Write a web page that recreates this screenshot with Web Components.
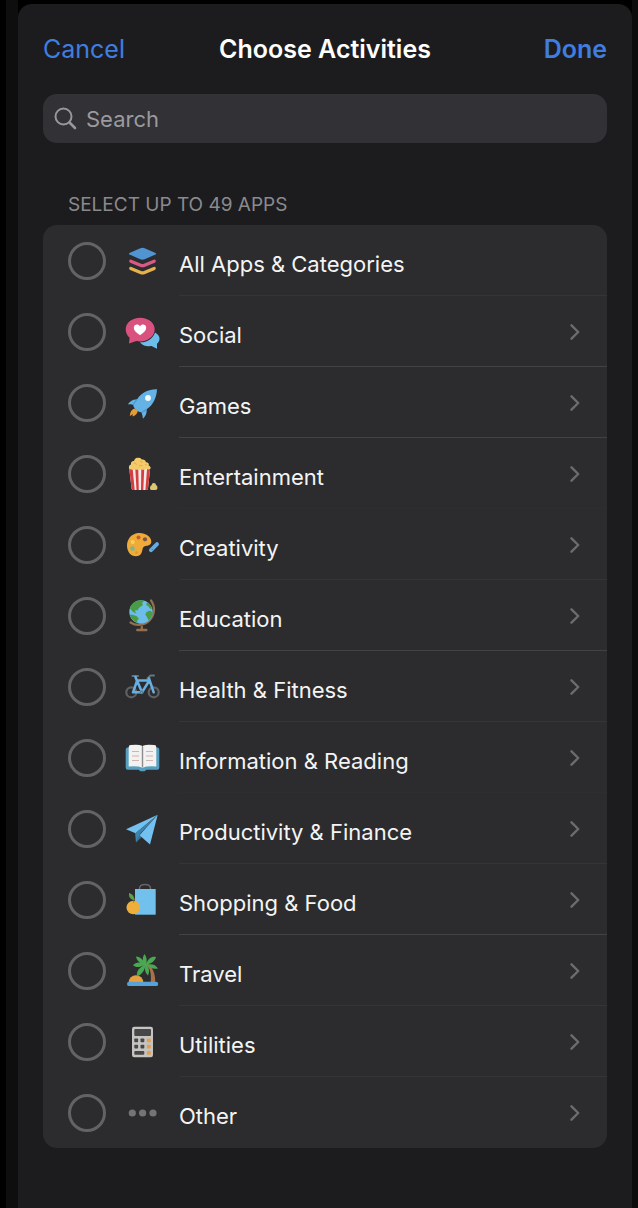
<!DOCTYPE html>
<html lang="en">
<head>
  <meta charset="UTF-8">
  <link rel="icon" href="data:," />
  <meta name="viewport" content="width=device-width, initial-scale=1.0">
  <title>Choose Activities</title>
  <style>
    * {
      box-sizing: border-box;
    }
    html {
      height: 100%;
      background: #000;
    }
    body {
      margin: 0;
      min-height: 100%;
      display: flex;
      padding-left: 6px;
      font-family: Inter, "Liberation Sans", sans-serif;
      color: #f4f4f5;
      background: #000;
    }
  </style>
</head>

<body>
  <activity-sheet>
    <sheet-header slot="header" heading="Choose Activities"></sheet-header>
    <search-field slot="header" placeholder="Search"></search-field>
    <activity-list heading="SELECT UP TO 49 APPS"></activity-list>
  </activity-sheet>
</body>

<template id="sheet-template">
  <style>
    :host {
      flex: 1;
      display: flex;
      padding: 0 6px 0 12px;
      background: linear-gradient(to right, #0e0e0e 12px, #000 12px, #000 calc(100% - 6px), #0c0c0c calc(100% - 6px));
    }
    .sheet {
      flex: 1;
      min-width: 0;
      margin-top: 4px;
      padding: 0 25px 60px;
      border-radius: 14px 14px 0 0;
      background: #1c1c1e;
    }
    header {
      display: flex;
      flex-direction: column;
    }
  </style>
  <div class="sheet">
    <header><slot name="header"></slot></header>
    <main><slot></slot></main>
  </div>
</template>

<template id="header-template">
  <style>
    :host {
      display: grid;
      grid-template-columns: 1fr auto 1fr;
      align-items: center;
      height: 90px;
    }
    h1, button {
      margin: 0;
      padding: 0;
      font-size: 25px;
      line-height: 32px;
    }
    h1 {
      font-weight: 600;
      color: #fff;
    }
    button {
      border: 0;
      background: none;
      font-family: inherit;
      font-weight: 400;
      color: #3f7ee0;
      justify-self: start;
      cursor: pointer;
    }
    .done {
      font-weight: 600;
      justify-self: end;
    }
  </style>
  <button type="button">Cancel</button>
  <h1></h1>
  <button type="button" class="done">Done</button>
</template>

<template id="search-template">
  <style>
    :host {
      display: block;
    }
    label {
      display: flex;
      align-items: center;
      gap: 8px;
      height: 49px;
      padding: 0 11px;
      border-radius: 14px;
      background: #313136;
    }
    svg {
      flex: none;
      width: 24px;
      height: 24px;
    }
    input {
      flex: 1;
      min-width: 0;
      padding: 0;
      border: 0;
      outline: 0;
      background: none;
      font-family: inherit;
      font-size: 22px;
      line-height: 28px;
      color: #fff;
    }
    input::placeholder {
      color: #9a9a9f;
      opacity: 1;
    }
  </style>
  <label>
    <svg viewBox="0 0 24 24" fill="none" stroke="#97979c" stroke-width="2" stroke-linecap="round" aria-hidden="true">
      <circle cx="9.500" cy="9.500" r="8"/>
      <path d="M15.500 15.500l5.500 5.500" stroke-width="2.600"/>
    </svg>
    <input type="text">
  </label>
</template>

<template id="list-template">
  <style>
    :host {
      display: block;
      padding-top: 48px;
    }
    h2 {
      margin: 0;
      padding: 0 25px 7px;
      font-size: 19px;
      line-height: 27px;
      font-weight: 400;
      color: #8a8a8e;
    }
    .card {
      border-radius: 14px;
      background: #2c2c2e;
      overflow: hidden;
    }
  </style>
  <h2></h2>
  <div class="card"></div>
</template>

<template id="row-template">
  <style>
    :host {
      display: flex;
      height: 71px;
      padding-left: 25px;
      --line: #353537;
    }
    :host([line="strong"]) { --line: #424244; }
    :host([line="none"]) { --line: #2e2e30; }
    * {
      box-sizing: border-box;
    }
    label {
      flex: 1;
      display: flex;
      align-items: center;
    }
    input {
      appearance: none;
      flex: none;
      width: 38px;
      height: 38px;
      margin: 0 19px 0 0;
      border: 3px solid #636366;
      border-radius: 50%;
    }
    input:checked {
      border-color: #3f7ee0;
      background: #3f7ee0;
    }
    svg {
      flex: none;
      display: block;
    }
    .icon {
      width: 36px;
      height: 36px;
      margin-right: 18px;
    }
    .name {
      flex: 1;
      align-self: stretch;
      padding-top: 7px;
      border-bottom: 1px solid var(--line);
      font-size: 22px;
      line-height: 64px;
      white-space: nowrap;
    }
    button {
      padding: 2px 27px 0 0;
      border: 0;
      border-bottom: 1px solid var(--line);
      background: none;
      cursor: pointer;
    }
    :host([last]) .name,
    :host([last]) button {
      border-color: transparent;
    }
  </style>
  <label>
    <input type="checkbox">
    <svg class="icon" viewBox="0 0 36 36" aria-hidden="true"></svg>
    <span class="name"><slot></slot></span>
  </label>
  <button type="button">
    <svg width="10" height="18" viewBox="0 0 10 18" fill="none" stroke="#6c6c70" stroke-width="2.400" stroke-linecap="round" stroke-linejoin="round" aria-hidden="true">
      <path d="M1.500 2.300L8.200 9L1.500 15.700"/>
    </svg>
  </button>
</template>

<script>
  const icons = {
    layers: `
      <g fill="none" stroke-width="3.300" stroke-linecap="round" stroke-linejoin="round">
        <path d="M5.800 25.500l9.700 4q2 .8 4 0l9.700-4" stroke="#e6b04a"/>
        <path d="M5.800 18.200l9.700 4q2 .8 4 0l9.700-4" stroke="#d55a86"/>
      </g>
      <path d="M4.500 10l10.800-4.700q2.200-.9 4.400 0L30.500 10q1.200.8 0 1.600l-10.800 4.700q-2.200.9-4.400 0L4.500 11.600q-1.200-.8 0-1.600z" fill="#5094d2"/>`,
    social: `
      <path d="M26 17.500c5 .5 8.500 3.500 8.500 7.200 0 2-1 3.700-2.500 5v5l-5.500-2.600c-5 .6-10-1-11.500-4.200z" fill="#6dbdec"/>
      <path d="M15.200 3.700c8 0 14.500 5 14.500 11.500S23.500 27.500 15.200 27.500c-1.300 0-2.600-.1-3.800-.4L4 29.500l.6-5.700C2.200 21.500.7 18.500.7 15.200.7 8.700 7.200 3.700 15.200 3.700z" fill="#d9517f" stroke="#2c2c2e" stroke-width="1.600" paint-order="stroke"/>
      <path d="M15 21.200c-4-2.700-6.200-4.700-6.200-7.400 0-3.500 4.500-4.500 6.200-1.400 1.700-3.100 6.200-2.100 6.200 1.400 0 2.700-2.200 4.700-6.200 7.400z" fill="#fff"/>`,
    rocket: `
      <path d="M9.500 23.500c-2.800.8-4.500 3.500-4.700 7.500 1.500-.5 2-1.200 2.800-2.200-.2 1.200 0 1.700.2 2.700 3-1.200 4.700-3 5-5.700z" fill="#e89b34"/>
      <path d="M32 4.300C24 4 16.500 7.500 12 14.500c-3.500-.5-6.500 1-9.300 5 2.500-.5 4.600-.2 5.600.6 0 3 4.500 7.400 8.200 7.200.8 2.300 1 4 1.500 6.500 3.300-3 4-7 3.600-9.500C28.500 20 31.700 12 32 4.300z" fill="#64b2e6"/>
      <path d="M12 14.500c-1.800 1.700-3 3.500-3.700 5.600M21.600 24.300c-1.700 1.500-3.200 2.400-5.100 3" fill="none" stroke="#4b98d1" stroke-width="1.200"/>
      <circle cx="23" cy="13" r="2.900" fill="#f1fbff"/>`,
    popcorn: `
      <path d="M4 11h21.300L23 32.500q-.2 1.500-1.700 1.500H8.300q-1.500 0-1.700-1.500z" fill="#f5e9e5"/>
      <path d="M4 11h3.500l2.200 23H8.300q-1.500 0-1.700-1.500zM10.200 11h3l.6 23h-2.300zM16.300 11h3l-1 23H16zM22.200 11h3.100L23 32.500q-.2 1.500-1.700 1.500h-.9z" fill="#d23e42"/>
      <path d="M4.300 13c-1-2.200 0-4.200 1.700-4.500-.3-2.200 1-3.700 3-3.400.5-2.200 2.300-3.800 4-3.200 1.500-.8 3.300.3 3.700 1.700 2-.5 4 .4 4.200 2.600 2.200-.2 3.400 1.600 2.800 3.300 1.700.6 2 2 1.500 3.500-2 1-4-.2-5.200.5-2 .9-3.500-.4-5.200.2-2 .6-3.800-.7-5.400-.2-1.700.6-3.500-.3-5.100-.5z" fill="#f3cb69"/>
      <path d="M9 7q2 0 2.500 1.800M15 5q2 0 2.300 2M14 10q2-1.200 3.500 0M20 9q1-1 2 0" fill="none" stroke="#dda846" stroke-width=".9"/>
      <path d="M25 32c0-2 1-2.500 1.700-2.700.1-1.400 1-2.300 2.200-2.200 1.200 0 2 .8 2 2 1 .4 1.700 1.500 1.500 3.200 0 1.200-.8 1.700-1.800 1.700h-4.300c-.8 0-1.300-.8-1.300-2z" fill="#dcc575"/>`,
    palette: `
      <path d="M13 6c6.500-.8 13.300 3.200 13.300 8.500 0 3-2.300 4-4.800 4.300-2.800.4-3.800 1.700-4.200 4.500-.4 3-2.300 6-6.300 6C5.500 29.300 2 24.500 2 18.500 2 12 6.500 6.800 13 6z" fill="#efaa39"/>
      <circle cx="13.500" cy="10.500" r="2" fill="#c9582f"/>
      <circle cx="20" cy="12.300" r="2.100" fill="#785a4d"/>
      <circle cx="7.700" cy="15" r="2.100" fill="#f7d24c"/>
      <circle cx="7.500" cy="21.500" r="2.300" fill="#82b682"/>
      <circle cx="11.500" cy="25.500" r="1.300" fill="#d79839"/>
      <path d="M32 17.200l-6 6" stroke="#66ace0" stroke-width="4" stroke-linecap="round"/>
      <path d="M26.500 21.700l1.800 1.800" stroke="#3f86bd" stroke-width="1"/>`,
    globe: `
      <path d="M26 2.500A15.300 15.300 0 0 1 5.500 24.500" fill="none" stroke="#94704e" stroke-width="2.200" stroke-linecap="round"/>
      <path d="M16.800 29v3M12.300 32h9" stroke="#94704e" stroke-width="2.400" stroke-linecap="round"/>
      <circle cx="16" cy="14" r="11.700" fill="#6cbdec"/>
      <path d="M9 4.600C12 2.500 15.500 2 18.500 2.600c.5 1-.2 1.900-1.500 2.200l1 2.500c-2 .4-2.500 1.700-4.200 2.700l-1.300 2.500c-1.500-.6-2.500-.4-2.500.8l1.500 2.200-3.500-1.500-3-3.500C5.300 8.500 6.800 6.200 9 4.600z" fill="#4b9b45"/>
      <path d="M22 4c2.800 1.600 4.500 4 5.200 6.500l-2 .3-2-2.500-2-1.300zM21.500 14l3.500-1.500 2.600 2c-.3 3.500-1.800 6-4 8l-1.800-3.700-1.500-2zM6.500 16.500l5 1.500 2.500 2.800-1.800 1.700.3 2.500C9 23.500 6 20.500 4.800 17z" fill="#4b9b45"/>`,
    bike: `
      <g fill="none" stroke-linecap="round" stroke-linejoin="round">
        <circle cx="6.300" cy="23.300" r="5" stroke="#5f6062" stroke-width="2.200"/>
        <circle cx="28.700" cy="23.300" r="5" stroke="#5f6062" stroke-width="2.200"/>
        <path d="M7.500 7h5.500M22.500 9.500l3-3h3.500" stroke="#62777f" stroke-width="2"/>
        <path d="M10.500 8l1.500 4L8 23.300h9L24.300 11.500H12l5 11.800M24 9.500l4.700 13.800" stroke="#68afe0" stroke-width="2.500"/>
        <circle cx="16.500" cy="23.300" r="1.300" stroke="#52809f" stroke-width="1.500"/>
      </g>`,
    book: `
      <path d="M2.700 7.500h29.600q2 0 2 2v18.300q0 2-2 2H21q-.6 1.500-2 1.500h-3q-1.400 0-2-1.500H2.700q-2 0-2-2V9.500q0-2 2-2z" fill="#579fc0"/>
      <path d="M3.700 7q0-1.800 2-2 8-1 11.300.8L17.500 7l.5-1.200Q21.300 4 29.300 5q2 .2 2 2v19.500q-9-.8-13.800 1.200-4.800-2-13.800-1.200z" fill="#f4f2f0"/>
      <path d="M17.500 6.500v20.800" stroke="#888e90" stroke-width="1.400"/>
      <path d="M7 11.500h7M7 16h7M7 20.500h7M21 11.500h7M21 16h7M21 20.500h7" stroke="#c9b6b5" stroke-width="1.200"/>`,
    plane: `
      <path d="M10.300 21.500L11 31.500l6-5.500z" fill="#346f91"/>
      <path d="M32.700 3.700L1 18.300l9.500 3.900z" fill="#72c1f0"/>
      <path d="M32.700 3.700L10.300 22.200 11 31.300 15 23z" fill="#3e83ad"/>
      <path d="M32.700 3.700L14.500 24.200 25 33.500z" fill="#72c1f0"/>`,
    bag: `
      <path d="M14.500 8V6.500q0-4 5.500-4t5.500 4V8" fill="none" stroke="#636568" stroke-width="1.500"/>
      <path d="M10 7h20.700v25.700H10z" fill="#72c1ed"/>
      <path d="M8.800 18.300C4.500 17 3.800 14.500 4 11c4 1.300 5.600 3.800 4.800 7.300z" fill="#58a44b"/>
      <circle cx="8.300" cy="25.500" r="6.800" fill="#edae3c"/>
      <path d="M8.500 20.500l1-4" stroke="#64853b" stroke-width="1"/>`,
    island: `
      <path d="M3.700 29.500a7.300 7.300 0 0 1 14.600 0z" fill="#e7a03f"/>
      <path d="M20.500 11.500c5 3.500 6 10 5.200 17.500h4.500c.3-8-2.500-15.500-8.500-18.500z" fill="#a8714c"/>
      <path d="M4.200 28.700H31a2.200 2.200 0 0 1 0 4.400H4.200a2.200 2.200 0 0 1 0-4.400z" fill="#55a3d9"/>
      <path d="M20 12C17 7 17.500 4 19.500 1c2 3 3 6 1.500 10 2.500-6 6-8 10-7-1 4-4.500 6.500-9 7.500 5-1 8.700 0 11 4-4.500.8-8-.2-11-3.500 2.500 4 2.500 7 1 10.500-3-3-3.600-6-2.500-10-1 5.500-3.700 9-8.500 11-.8-5 2-9 7.500-11.500-5 2.500-8.500 2.800-11.500.2 3-3.400 7-3.500 11.500-1C14.500 10 11.800 7.500 11 3.500c4.500.5 8 3.500 9 8.500z" fill="#4aa852"/>`,
    calculator: `
      <rect x="7" y="2.700" width="21" height="30.500" rx="2.200" fill="#c6c4c1"/>
      <rect x="9.300" y="5" width="16.700" height="7" rx="1" fill="#464748"/>
      <g fill="#464748">
        <rect x="9.300" y="14.500" width="3.800" height="3.800" rx=".8"/>
        <rect x="15.500" y="14.500" width="3.800" height="3.800" rx=".8"/>
        <rect x="9.300" y="20.800" width="3.800" height="3.800" rx=".8"/>
        <rect x="15.500" y="20.800" width="3.800" height="3.800" rx=".8"/>
        <rect x="9.300" y="27" width="10" height="3.800" rx="1"/>
      </g>
      <g fill="#e5a04a">
        <rect x="21.800" y="14.500" width="4" height="3.800" rx=".8"/>
        <rect x="21.800" y="20.800" width="4" height="3.800" rx=".8"/>
        <rect x="21.800" y="27" width="4" height="3.800" rx=".8"/>
      </g>`,
    dots: `
      <g fill="#747477">
        <circle cx="7.300" cy="18" r="3.600"/>
        <circle cx="17.600" cy="18" r="3.600"/>
        <circle cx="28" cy="18" r="3.600"/>
      </g>`,
  };

  const activities = [
    { name: "All Apps & Categories", icon: "layers", single: true },
    { name: "Social", icon: "social", line: "strong" },
    { name: "Games", icon: "rocket", line: "strong" },
    { name: "Entertainment", icon: "popcorn", line: "none" },
    { name: "Creativity", icon: "palette" },
    { name: "Education", icon: "globe", line: "strong" },
    { name: "Health & Fitness", icon: "bike" },
    { name: "Information & Reading", icon: "book", line: "none" },
    { name: "Productivity & Finance", icon: "plane" },
    { name: "Shopping & Food", icon: "bag", line: "strong" },
    { name: "Travel", icon: "island" },
    { name: "Utilities", icon: "calculator" },
    { name: "Other", icon: "dots" },
  ];

  class BaseElement extends HTMLElement {
    constructor(templateId) {
      super();
      this.attachShadow({ mode: "open" });
      const template = document.getElementById(templateId);
      this.shadowRoot.appendChild(template.content.cloneNode(true));
    }
    $(selector) {
      return this.shadowRoot.querySelector(selector);
    }
  }

  class ActivitySheet extends BaseElement {
    constructor() {
      super("sheet-template");
    }
  }

  class SheetHeader extends BaseElement {
    constructor() {
      super("header-template");
    }
    connectedCallback() {
      this.$("h1").textContent = this.getAttribute("heading");
    }
  }

  class SearchField extends BaseElement {
    constructor() {
      super("search-template");
    }
    connectedCallback() {
      const input = this.$("input");
      input.placeholder = this.getAttribute("placeholder");
      input.setAttribute("aria-label", input.placeholder);
    }
  }

  class ActivityRow extends BaseElement {
    constructor() {
      super("row-template");
    }
    connectedCallback() {
      this.$(".icon").innerHTML = icons[this.getAttribute("icon")];
      const button = this.$("button");
      if (this.hasAttribute("single")) {
        button.remove();
      } else {
        button.setAttribute("aria-label", this.textContent);
      }
    }
  }

  class ActivityList extends BaseElement {
    constructor() {
      super("list-template");
    }
    connectedCallback() {
      this.$("h2").textContent = this.getAttribute("heading");
      const card = this.$(".card");
      activities.forEach((activity, i) => {
        const row = document.createElement("activity-row");
        row.textContent = activity.name;
        row.setAttribute("icon", activity.icon);
        if (activity.line) row.setAttribute("line", activity.line);
        row.toggleAttribute("single", !!activity.single);
        row.toggleAttribute("last", i === activities.length - 1);
        card.appendChild(row);
      });
    }
  }

  customElements.define("activity-row", ActivityRow);
  customElements.define("activity-list", ActivityList);
  customElements.define("search-field", SearchField);
  customElements.define("sheet-header", SheetHeader);
  customElements.define("activity-sheet", ActivitySheet);
</script>

</html>
